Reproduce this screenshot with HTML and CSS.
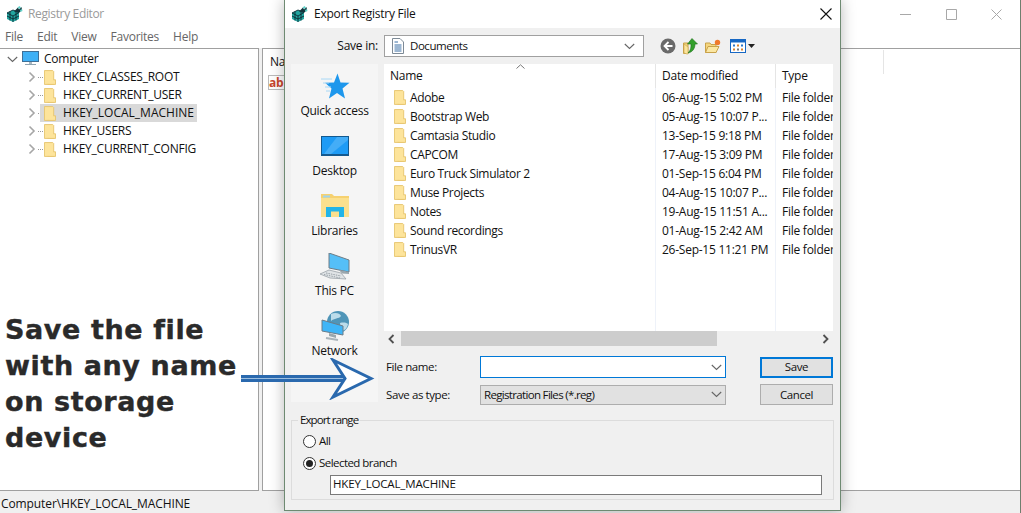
FILE: index.html
```html
<!DOCTYPE html>
<html lang="en">
<head>
<meta charset="utf-8">
<title>Export Registry File</title>
<link rel="stylesheet" href="styles.css">
</head>
<body>
<svg class="defs" width="0" height="0" aria-hidden="true">
  <defs>
    <symbol id="folder" viewBox="0 0 13 16">
      <path d="M.5.5H9.5L10.5 1.5V15.5H.5Z" fill="#fde49b" stroke="#e6c46e"/>
      <path d="M10.5 10.5H12.5V15.5H4" fill="#fde49b" stroke="#e6c46e"/>
    </symbol>
    <symbol id="chev-r" viewBox="0 0 8 12">
      <path d="M1.5 1.5 6 6 1.5 10.5" fill="none" stroke="#a6a6a6" stroke-width="1.6"/>
    </symbol>
    <symbol id="chev-d" viewBox="0 0 11 7">
      <path d="M.8 1 5.5 5.5 10.2 1" fill="none" stroke="#666" stroke-width="1.1"/>
    </symbol>
    <symbol id="regicon" viewBox="0 0 16 16">
      <path d="M0 7 6 4 12 6.500V13L6 16 0 13Z" fill="#23a5a0"/>
      <path d="M0 7 6 10V16M6 10 12 6.500M3 5.500V14.500M9 5.200V14.500M0 10 6 13 12 10M0 7 6 4 12 6.500" fill="none" stroke="#0a2a33" stroke-width=".9"/>
      <path d="M7 5.500 11 1.500 12 3.500 14.500 1 15 4 12.500 6.500 10.500 6.500Z" fill="#12343c"/>
      <path d="M10.500 1.500 12.500 0 14 1.500 12.500 3Z" fill="#63d3ca"/>
      <path d="M13 4 15 3 15.500 5 13.500 6Z" fill="#63d3ca"/>
    </symbol>
  </defs>
</svg>

<section class="regedit">
  <header class="reg-title">
    <svg class="reg-logo"><use href="#regicon"/></svg>
    <span class="reg-title-text">Registry Editor</span>
    <span class="win-controls">
      <svg width="11" height="11" viewBox="0 0 11 11"><path d="M0 5.500H11" stroke="#a8a8a8"/></svg>
      <svg width="11" height="11" viewBox="0 0 11 11"><path d="M.5.500H10.500V10.500H.5Z" fill="none" stroke="#a8a8a8"/></svg>
      <svg width="11" height="11" viewBox="0 0 11 11"><path d="M.5.500 10.500 10.500M10.500.500 .5 10.500" stroke="#a8a8a8"/></svg>
    </span>
  </header>
  <nav class="reg-menu">
    <span>File</span><span>Edit</span><span>View</span><span>Favorites</span><span>Help</span>
  </nav>
  <div class="reg-panes">
    <div class="tree">
      <div class="tree-root">
        <svg class="root-chev" width="11" height="7"><use href="#chev-d"/></svg>
        <svg class="computer" width="17" height="15" viewBox="0 0 17 15">
          <rect x=".5" y=".5" width="16" height="10" fill="#3fb0f5" stroke="#3f6f96"/>
          <path d="M7 11H10V13H7Z" fill="#a9b7c1"/><path d="M3 13.500H14" stroke="#8fa3b0"/>
        </svg>
        <span>Computer</span>
      </div>
      <div class="tree-row"><svg class="t-chev"><use href="#chev-r"/></svg><span class="dots"></span><span class="t-item"><svg class="t-folder"><use href="#folder"/></svg><span>HKEY_CLASSES_ROOT</span></span></div>
      <div class="tree-row"><svg class="t-chev"><use href="#chev-r"/></svg><span class="dots"></span><span class="t-item"><svg class="t-folder"><use href="#folder"/></svg><span>HKEY_CURRENT_USER</span></span></div>
      <div class="tree-row"><svg class="t-chev"><use href="#chev-r"/></svg><span class="dots"></span><span class="t-item selected"><svg class="t-folder"><use href="#folder"/></svg><span>HKEY_LOCAL_MACHINE</span></span></div>
      <div class="tree-row"><svg class="t-chev"><use href="#chev-r"/></svg><span class="dots"></span><span class="t-item"><svg class="t-folder"><use href="#folder"/></svg><span>HKEY_USERS</span></span></div>
      <div class="tree-row"><svg class="t-chev"><use href="#chev-r"/></svg><span class="dots"></span><span class="t-item"><svg class="t-folder"><use href="#folder"/></svg><span>HKEY_CURRENT_CONFIG</span></span></div>
    </div>
    <div class="values">
      <div class="values-head"><span class="values-name">Name</span><span class="values-div"></span></div>
      <div class="ab-icon">ab</div>
    </div>
  </div>
  <footer class="reg-status">Computer\HKEY_LOCAL_MACHINE</footer>
</section>

<section class="dialog">
  <header class="dlg-title">
    <svg class="reg-logo"><use href="#regicon"/></svg>
    <span>Export Registry File</span>
    <svg class="dlg-close" width="12" height="12" viewBox="0 0 12 12"><path d="M.5.500 11.500 11.500M11.500.500 .5 11.500" stroke="#111" stroke-width="1.1"/></svg>
  </header>
  <div class="dlg-body">
    <div class="toolbar">
      <label class="save-in">Save in:</label>
      <div class="combo">
        <svg class="doc" width="12" height="16" viewBox="0 0 12 16">
          <path d="M.5.500H8L11.500 4V15.500H.5Z" fill="#fff" stroke="#7d8a96"/>
          <path d="M2.500 4H6M2.500 7H9.500M2.500 9H9.500M2.500 11H9.500M2.500 13H9.500" stroke="#3a6ea5"/>
        </svg>
        <span class="combo-text">Documents</span>
        <svg class="combo-chev" width="11" height="7"><use href="#chev-d"/></svg>
      </div>
      <div class="tools">
        <svg width="16" height="16" viewBox="0 0 16 16">
          <circle cx="8" cy="8" r="7.500" fill="#6a6a6a"/><path d="M8.500 4 4.500 8 8.500 12M5 8H12.500" fill="none" stroke="#fff" stroke-width="1.800"/>
        </svg>
        <svg width="15" height="17" viewBox="0 0 15 17">
          <path d="M.5 5H5V15.500H.5Z" fill="#f2d27a" stroke="#c9a24a"/>
          <path d="M4 16 1 15V6L5 9V16Z" fill="#fbe59c" stroke="#c9a24a" stroke-width=".6"/>
          <path d="M9 .5 14.500 6H12C12 10 10 14 5 15 8 12 8 9 8 6H4.500Z" fill="#33a02c" stroke="#1d6d1a" stroke-width=".6"/>
        </svg>
        <svg width="16" height="14" viewBox="0 0 16 14">
          <path d="M.5 13.500V4H5L6 5.500H11V13.500Z" fill="#f5d680" stroke="#c9a24a"/>
          <path d="M.5 13.500 3 7.500H14L11 13.500Z" fill="#fbe7a3" stroke="#c9a24a"/>
          <circle cx="12.500" cy="3.500" r="2.700" fill="#f0792b"/>
        </svg>
        <span class="view-tool">
          <svg width="16" height="14" viewBox="0 0 16 14">
            <rect x=".5" y=".5" width="15" height="13" fill="#fff" stroke="#1768c4"/>
            <path d="M1 1H15V3.500H1Z" fill="#1768c4"/>
            <path d="M3 5.500H5V7.500H3Z" fill="#2a76c9"/><path d="M7 5.500H9V7.500H7Z" fill="#d9822b"/><path d="M11 5.500H13V7.500H11Z" fill="#2a76c9"/>
            <path d="M3 9.500H5V11.500H3Z" fill="#d9822b"/><path d="M7 9.500H9V11.500H7Z" fill="#777"/><path d="M11 9.500H13V11.500H11Z" fill="#d9822b"/>
          </svg>
          <svg width="7" height="4" viewBox="0 0 7 4"><path d="M0 0H7L3.500 4Z" fill="#222"/></svg>
        </span>
      </div>
    </div>

    <div class="middle">
      <aside class="places">
        <div class="place">
          <svg width="30" height="27" viewBox="0 0 30 27">
            <path d="M17.500 .5 20.500 9.500 29.500 9.800 22.500 15.500 25 25.500 17 20 9 25.500 11.500 15.500 5 9.800 14 9.500Z" fill="#1e97ec"/>
            <path d="M1 6H12M3 10H9M5 14H11M6 18H10" stroke="#a8d8f6"/>
          </svg>
          <span>Quick access</span>
        </div>
        <div class="place">
          <svg width="28" height="20" viewBox="0 0 28 20">
            <rect width="28" height="20" fill="#13598f"/><rect x="1" y="1" width="26" height="17" fill="#1e9bf5"/>
            <path d="M16 1H27V4L10 18H3Z" fill="#44adf7"/>
          </svg>
          <span>Desktop</span>
        </div>
        <div class="place">
          <svg width="28" height="24" viewBox="0 0 28 24">
            <path d="M0 0H11L13 2H28V23H0Z" fill="#f6d170"/>
            <path d="M0 4H28V23H0Z" fill="#fbe08e"/>
            <path d="M2 1.500H9V3.500H2Z" fill="#9fd4ef"/>
            <path d="M5 23V13H23V23H18V17.500H10V23Z" fill="#23b4e8"/>
          </svg>
          <span>Libraries</span>
        </div>
        <div class="place">
          <svg width="31" height="27" viewBox="0 0 31 27">
            <path d="M10 0 30 7V19L10 15Z" fill="#55bff7" stroke="#6e7d87"/>
            <path d="M30 19V21L23 20.500 20 17Z" fill="#9aa6ad"/>
            <path d="M10 17 22 20 27 26 11 25 1 21Z" fill="#dfe3e6" stroke="#9aa2a8" stroke-width=".8"/>
            <path d="M7 20 22 23M5 21.500 21 25" stroke="#9aa2a8" stroke-dasharray="1.500 1"/>
          </svg>
          <span>This PC</span>
        </div>
        <div class="place">
          <svg width="28" height="30" viewBox="0 0 28 30">
            <circle cx="17" cy="11" r="11" fill="#4f95b8"/>
            <path d="M10 3C14 1 19 2 20 5 18 8 13 7 10 10ZM19 12C23 11 26 12 27 13 26 18 23 20 20 20Z" fill="#bcdcea"/>
            <path d="M1 9 22 15V24L1 20Z" fill="#3fb5f7" stroke="#6b7c88"/>
            <path d="M8 22 15 24V27L8 25Z" fill="#9ba7ad"/>
            <path d="M5 27 17 29" stroke="#aab4ba" stroke-width="2"/>
          </svg>
          <span>Network</span>
        </div>
      </aside>

      <div class="right-col">
        <div class="filelist">
          <div class="file-grid head">
            <span class="col-name">Name<svg class="sort" width="9" height="5" viewBox="0 0 9 5"><path d="M.5 4.500 4.500 .8 8.500 4.500" fill="none" stroke="#777"/></svg></span>
            <span class="col-date">Date modified</span>
            <span class="col-type">Type</span>
          </div>
          <div class="file-grid"><span class="col-name"><svg class="f-folder"><use href="#folder"/></svg>Adobe</span><span class="col-date">06-Aug-15 5:02 PM</span><span class="col-type">File folder</span></div>
          <div class="file-grid"><span class="col-name"><svg class="f-folder"><use href="#folder"/></svg>Bootstrap Web</span><span class="col-date">05-Aug-15 10:07 P...</span><span class="col-type">File folder</span></div>
          <div class="file-grid"><span class="col-name"><svg class="f-folder"><use href="#folder"/></svg>Camtasia Studio</span><span class="col-date">13-Sep-15 9:18 PM</span><span class="col-type">File folder</span></div>
          <div class="file-grid"><span class="col-name"><svg class="f-folder"><use href="#folder"/></svg>CAPCOM</span><span class="col-date">17-Aug-15 3:09 PM</span><span class="col-type">File folder</span></div>
          <div class="file-grid"><span class="col-name"><svg class="f-folder"><use href="#folder"/></svg>Euro Truck Simulator 2</span><span class="col-date">01-Sep-15 6:04 PM</span><span class="col-type">File folder</span></div>
          <div class="file-grid"><span class="col-name"><svg class="f-folder"><use href="#folder"/></svg>Muse Projects</span><span class="col-date">04-Aug-15 10:07 P...</span><span class="col-type">File folder</span></div>
          <div class="file-grid"><span class="col-name"><svg class="f-folder"><use href="#folder"/></svg>Notes</span><span class="col-date">19-Aug-15 11:51 A...</span><span class="col-type">File folder</span></div>
          <div class="file-grid"><span class="col-name"><svg class="f-folder"><use href="#folder"/></svg>Sound recordings</span><span class="col-date">01-Aug-15 2:42 AM</span><span class="col-type">File folder</span></div>
          <div class="file-grid"><span class="col-name"><svg class="f-folder"><use href="#folder"/></svg>TrinusVR</span><span class="col-date">26-Sep-15 11:21 PM</span><span class="col-type">File folder</span></div>
          <div class="file-grid filler"><span class="col-name"></span><span class="col-date"></span><span class="col-type"></span></div>
        </div>
        <div class="hscroll">
          <svg width="7" height="10" viewBox="0 0 7 10"><path d="M5.500 1 1.500 5 5.500 9" fill="none" stroke="#505050" stroke-width="1.800"/></svg>
          <span class="thumb-track"><span class="thumb"></span></span>
          <svg width="7" height="10" viewBox="0 0 7 10"><path d="M1.500 1 5.500 5 1.500 9" fill="none" stroke="#505050" stroke-width="1.800"/></svg>
        </div>
        <div class="form">
          <label>File name:</label>
          <div class="field focus"><svg width="11" height="7"><use href="#chev-d"/></svg></div>
          <button class="btn default">Save</button>
          <label>Save as type:</label>
          <div class="field select"><span>Registration Files (*.reg)</span><svg width="11" height="7"><use href="#chev-d"/></svg></div>
          <button class="btn">Cancel</button>
        </div>
      </div>
    </div>

    <fieldset class="range">
      <legend>Export range</legend>
      <div class="radio"><span class="dot"></span>All</div>
      <div class="radio"><span class="dot on"></span>Selected branch</div>
      <div class="branch">HKEY_LOCAL_MACHINE</div>
    </fieldset>
  </div>
</section>

<div class="callout">Save the file<br>with any name<br>on storage<br>device</div>
<svg class="arrow" width="136" height="42" viewBox="0 0 136 42">
  <rect x="1" y="17" width="106" height="7" fill="#2a69ae"/>
  <rect x="1" y="20" width="106" height="1" fill="#9dbfe0"/>
  <path d="M93 2 131 20.500 93 39 105 20.500Z" fill="#fff" stroke="#2a69ae" stroke-width="3"/>
</svg>
</body>
</html>
```

FILE: styles.css
```css
* { box-sizing: border-box; }
html, body { margin: 0; padding: 0; }
body {
  position: relative;
  width: 1021px;
  height: 513px;
  overflow: hidden;
  background: #fff;
  font: 12px/16px "Open Sans", "Noto Sans", sans-serif;
  letter-spacing: -0.25px;
  color: #111;
}
.defs { position: absolute; }

/* Registry editor window (background) */
.regedit {
  position: absolute;
  inset: 0;
  display: flex;
  flex-direction: column;
  border-right: 1px solid #6f7f6f;
}
.reg-title {
  height: 28px;
  display: flex;
  align-items: center;
  padding-left: 7px;
  gap: 5px;
}
.reg-logo { width: 16px; height: 16px; flex: none; }
.reg-title-text { color: #9a9a9a; letter-spacing: -0.35px; }
.win-controls {
  margin-left: auto;
  margin-right: 18px;
  display: flex;
  gap: 34.5px;
}
.reg-menu {
  height: 18px;
  display: flex;
  gap: 14px;
  padding-left: 5px;
  align-items: center;
  color: #666;
}
.reg-panes {
  flex: 1;
  display: flex;
  gap: 3px;
  margin-top: 2px;
  background: #f0f0f0;
}
.tree {
  width: 259px;
  background: #fff;
  border: 1px solid #a0a0a0;
  border-width: 1px 1px 1px 0;
  padding-top: 1px;
}
.tree-root, .tree-row { height: 18px; display: flex; align-items: center; }
.tree-root span { margin-left: 5px; }
.root-chev { margin-left: 7px; margin-right: 4px; }
.computer { margin-top: -1px; }
.tree-row { padding-left: 28px; }
.t-chev { width: 8px; height: 12px; flex: none; }
.dots {
  width: 5px;
  margin-left: 2px;
  border-top: 1px dotted #999;
}
.t-item {
  display: flex;
  align-items: center;
  gap: 7px;
  height: 18px;
  padding: 0 3px 0 4px;
  margin-left: -3px;
}
.t-item.selected { background: #d9d9d9; letter-spacing: 0; }
.t-folder { width: 12px; height: 15px; flex: none; }
.values {
  flex: 1;
  background: #fff;
  border: 1px solid #a0a0a0;
  border-width: 1px 0 1px 1px;
}
.values-head { height: 26px; display: flex; align-items: center; }
.values-name { margin-left: 7px; }
.values-div {
  margin-left: 580px;
  width: 1px;
  height: 24px;
  background: #e5e5e5;
}
.ab-icon {
  margin: 0 0 0 5px;
  width: 16px;
  height: 15px;
  font-size: 12px;
  line-height: 13px;
  font-weight: 700;
  color: #c8452c;
  border: 1px solid #bbb;
  border-right: 0;
}
.reg-status {
  height: 22px;
  background: #f0f0f0;
  padding: 5px 0 0 1px;
  letter-spacing: -0.1px;
}

/* Save dialog */
.dialog {
  position: absolute;
  left: 284px;
  top: 0;
  width: 557px;
  height: 511px;
  background: #f0f0f0;
  border: 1px solid #6e8a72;
  border-top: 0;
  box-shadow: 0 0 14px rgba(0, 0, 0, .28);
  display: flex;
  flex-direction: column;
}
.dlg-title {
  height: 28px;
  background: #fff;
  display: flex;
  align-items: center;
  padding-left: 7px;
  gap: 6px;
}
.dlg-close { margin-left: auto; margin-right: 8px; }
.dlg-body { flex: 1; padding: 0 7px 0 6px; }
.toolbar {
  height: 36px;
  display: flex;
  align-items: center;
}
.save-in { width: 87px; text-align: right; margin-right: 6px; }
.combo {
  width: 260px;
  height: 22px;
  background: #fff;
  border: 1px solid #a0a0a0;
  display: flex;
  align-items: center;
  padding: 0 8px 0 7px;
}
.combo-text { font-size: 11.5px; letter-spacing: -0.45px; }
.doc { margin-right: 6px; }
.combo-chev { margin-left: auto; }
.tools {
  display: flex;
  align-items: center;
  gap: 7px;
  margin-left: 16px;
}
.view-tool { display: flex; align-items: center; gap: 2px; margin-left: 2px; }

.middle { display: flex; gap: 6px; height: 338px; }
.places {
  width: 87px;
  background: #f5f5f5;
  display: flex;
  flex-direction: column;
}
.place {
  height: 60px;
  flex: none;
  display: grid;
  grid-template-rows: 39px 16px;
  justify-items: center;
}
.place svg { align-self: center; margin-top: 5px; }
.right-col { width: 449px; display: flex; flex-direction: column; }
.filelist {
  height: 267px;
  flex: none;
  background: #fff;
  display: flex;
  flex-direction: column;
  overflow: hidden;
}
.file-grid {
  display: grid;
  grid-template-columns: 271px 120px 58px;
  height: 19px;
  line-height: 19px;
  flex: none;
}
.file-grid.head { height: 24px; line-height: 24px; }
.file-grid.filler { flex: 1; }
.col-name {
  display: flex;
  align-items: center;
  position: relative;
  white-space: nowrap;
  letter-spacing: -0.35px;
  padding-left: 10px;
}
.head .col-name { padding-left: 6px; letter-spacing: -0.25px; }
.col-date, .col-type { padding-left: 6px; border-left: 1px solid #eef2f9; white-space: nowrap; overflow: hidden; }
.head .col-date, .head .col-type { border-left-color: #e5e5e5; }
.sort { position: absolute; left: 132px; top: 0; }
.f-folder { width: 12px; height: 15px; margin-right: 4px; flex: none; }
.hscroll {
  height: 15px;
  flex: none;
  display: flex;
  align-items: center;
  padding: 0 4px;
  background: #f0f0f0;
}
.thumb-track { flex: 1; margin: 0 5px 0 6px; height: 15px; display: block; }
.thumb { display: block; width: 316px; height: 15px; background: #cdcdcd; }
.form {
  flex: none;
  display: grid;
  grid-template-columns: 96px 246px 107px;
  row-gap: 6px;
  padding-top: 10px;
  align-items: center;
  font-size: 11.5px;
  letter-spacing: -0.4px;
}
.form label { padding-left: 2px; }
.form .btn { margin-left: 34px; justify-self: start; }
.field {
  height: 22px;
  display: flex;
  align-items: center;
  justify-content: flex-end;
  padding: 0 3px;
  background: #fff;
}
.field.focus { border: 1px solid #0078d7; }
.field.select {
  height: 20px;
  background: #e1e1e1;
  border: 1px solid #adadad;
  justify-content: space-between;
  letter-spacing: -0.67px;
}
.btn {
  width: 73px;
  height: 21px;
  padding: 0;
  font: inherit;
  letter-spacing: inherit;
  color: #111;
  background: #e1e1e1;
  border: 1px solid #adadad;
}
.btn.default { border: 2px solid #0078d7; }

.range {
  margin: 11px 0 0;
  padding: 3px 0 0 11px;
  height: 87px;
  width: 543px;
  min-width: 0;
  border: 1px solid #dcdcdc;
  font-size: 11.5px;
  letter-spacing: -0.55px;
}
.range legend { padding: 0 2px; margin-left: -5px; line-height: 14px; letter-spacing: -0.9px; }
.radio { display: flex; align-items: center; gap: 3px; height: 22px; }
.dot {
  width: 13px;
  height: 13px;
  border: 1px solid #333;
  border-radius: 50%;
  background: #fff;
  display: grid;
  place-items: center;
}
.dot.on::after {
  content: "";
  width: 7px;
  height: 7px;
  border-radius: 50%;
  background: #222;
}
.branch {
  margin: 1px 0 0 27px;
  width: 492px;
  height: 20px;
  padding: 0 2px;
  background: #fff;
  border: 1px solid #7a7a7a;
  letter-spacing: -0.15px;
}

/* Tutorial annotation over the screenshot */
.callout {
  position: absolute;
  left: 5px;
  top: 312px;
  font: 700 27px/36px "DejaVu Sans", sans-serif;
  letter-spacing: 0.6px;
  -webkit-text-stroke: 0.4px #2a2a2a;
  color: #2a2a2a;
}
.arrow { position: absolute; left: 240px; top: 358px; }
```
